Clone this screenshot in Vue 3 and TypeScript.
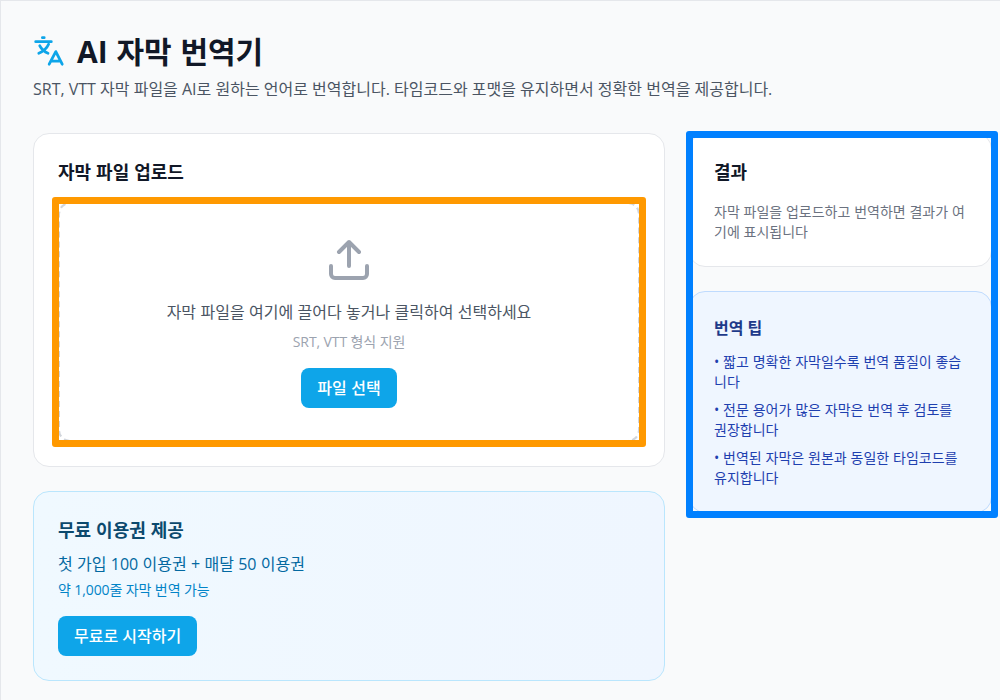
<script setup lang="ts">
const tips: string[] = [
  '짧고 명확한 자막일수록 번역 품질이 좋습니다',
  '전문 용어가 많은 자막은 번역 후 검토를 권장합니다',
  '번역된 자막은 원본과 동일한 타임코드를 유지합니다',
]
</script>

<template>
  <main class="page">
    <header class="header">
      <div class="title-row">
        <svg class="logo" viewBox="0 0 32 32" aria-hidden="true">
          <path d="M2.7 6.7H18.3M9.4 2.7H11.2M15.6 9.2C13.8 13.2 10.6 16.2 5.8 18.2M6.8 10.8C8.6 14.2 11.4 16.8 15 18.2M16.2 29.2L22.8 16.6L29.2 29.2M18.4 26.2H27.2" />
        </svg>
        <h1>AI 자막 번역기</h1>
      </div>
      <p>SRT, VTT 자막 파일을 AI로 원하는 언어로 번역합니다. 타임코드와 포맷을 유지하면서 정확한 번역을 제공합니다.</p>
    </header>

    <div class="columns">
      <div class="column">
        <section class="card">
          <h2>자막 파일 업로드</h2>
          <div class="drop-wrap">
            <div class="dropzone">
              <svg class="upload" viewBox="0 0 24 24" aria-hidden="true">
                <path d="M21 15v4a2 2 0 0 1-2 2H5a2 2 0 0 1-2-2v-4M17 8l-5-5-5 5M12 3v12" />
              </svg>
              <p class="drop-text">자막 파일을 여기에 끌어다 놓거나 클릭하여 선택하세요</p>
              <p class="formats">SRT, VTT 형식 지원</p>
              <button type="button">파일 선택</button>
            </div>
            <div class="highlight orange"></div>
          </div>
        </section>

        <section class="card offer">
          <h2>무료 이용권 제공</h2>
          <p class="credits">첫 가입 100 이용권 + 매달 50 이용권</p>
          <p class="estimate">약 1,000줄 자막 번역 가능</p>
          <button type="button" class="start">무료로 시작하기</button>
        </section>
      </div>

      <aside class="column side">
        <section class="card">
          <h2>결과</h2>
          <p class="result">자막 파일을 업로드하고 번역하면 결과가 여기에 표시됩니다</p>
        </section>
        <section class="card tips">
          <h3>번역 팁</h3>
          <ul>
            <li v-for="tip in tips" :key="tip">• {{ tip }}</li>
          </ul>
        </section>
        <div class="highlight blue"></div>
      </aside>
    </div>
  </main>
</template>

<style>
body {
  background: #f9fafb;
  overflow: hidden;
}
</style>

<style scoped>
* {
  box-sizing: border-box;
}
h1, h2, h3, p, ul {
  margin: 0;
  padding: 0;
}
.page {
  height: 700px;
  padding: 32px 7px 0 32px;
  border-top: 1px solid #e5e7eb;
  border-left: 1px solid #e5e7eb;
  background: #f9fafb;
  color: #111827;
  font-family: "Open Sans", "Noto Sans CJK KR", sans-serif;
  font-size: 16px;
  line-height: 24px;
}
.header {
  margin-bottom: 32px;
}
.title-row {
  display: flex;
  align-items: center;
  gap: 12px;
  margin-bottom: 8px;
}
.logo {
  width: 32px;
  height: 32px;
  fill: none;
  stroke: #0ea5e9;
  stroke-width: 2.8;
  stroke-linecap: round;
  stroke-linejoin: round;
}
h1 {
  height: 36px;
  font-size: 30px;
  line-height: 38px;
  font-weight: 700;
  word-spacing: 1px;
}
.header p {
  color: #4b5563;
  white-space: nowrap;
}
.columns {
  display: grid;
  grid-template-columns: 632px 303px;
  gap: 24px;
  align-items: start;
}
.column {
  display: flex;
  flex-direction: column;
  gap: 24px;
}
.side {
  position: relative;
}
.card {
  padding: 24px;
  border: 1px solid #e5e7eb;
  border-radius: 16px;
  background: #fff;
}
h2 {
  margin-bottom: 16px;
  font-size: 18px;
  line-height: 28px;
  font-weight: 600;
  word-spacing: 0.3px;
}
.drop-wrap {
  position: relative;
}
.dropzone {
  display: flex;
  flex-direction: column;
  align-items: center;
  padding: 32px;
  border: 2px dashed #d1d5db;
  border-radius: 12px;
  text-align: center;
}
.upload {
  width: 48px;
  height: 48px;
  margin-bottom: 16px;
  fill: none;
  stroke: #9ca3af;
  stroke-width: 2;
  stroke-linecap: round;
  stroke-linejoin: round;
}
.drop-text {
  margin-bottom: 8px;
  color: #4b5563;
  word-spacing: 0.2px;
}
.formats {
  margin-bottom: 16px;
  color: #9ca3af;
  font-size: 14px;
  line-height: 20px;
  letter-spacing: -0.1px;
}
button {
  display: block;
  height: 40px;
  padding: 8px 16px;
  border: 0;
  border-radius: 8px;
  background: #0ea5e9;
  color: #fff;
  font: inherit;
  font-weight: 500;
  word-spacing: 0.5px;
}
.start {
  word-spacing: 0;
}
.offer {
  border-color: #bae6fd;
  background: linear-gradient(to right, #f0f9ff, #eff6ff);
}
.offer h2 {
  margin-bottom: 8px;
  color: #0c4a6e;
}
.credits {
  margin-bottom: 4px;
  color: #0369a1;
  word-spacing: 0.15px;
}
.estimate {
  margin-bottom: 16px;
  color: #0284c7;
  font-size: 14px;
  line-height: 20px;
  letter-spacing: -0.1px;
}
.result {
  color: #6b7280;
  font-size: 14px;
  line-height: 20px;
  word-spacing: 0.15px;
}
.tips {
  border-color: #bfdbfe;
  background: #eff6ff;
}
h3 {
  margin-bottom: 12px;
  color: #1e3a8a;
  font-size: 16px;
  line-height: 24px;
  font-weight: 600;
}
ul {
  display: flex;
  flex-direction: column;
  gap: 8px;
  list-style: none;
  color: #1e40af;
  font-size: 14px;
  line-height: 20px;
  word-spacing: 0.2px;
}
.highlight {
  position: absolute;
  border: 7px solid;
  border-radius: 3px;
  pointer-events: none;
}
.orange {
  inset: -5px -6px;
  border-color: #ff9900;
}
.blue {
  inset: -2px -6px -5px -3px;
  border-color: #0080ff;
}
</style>
